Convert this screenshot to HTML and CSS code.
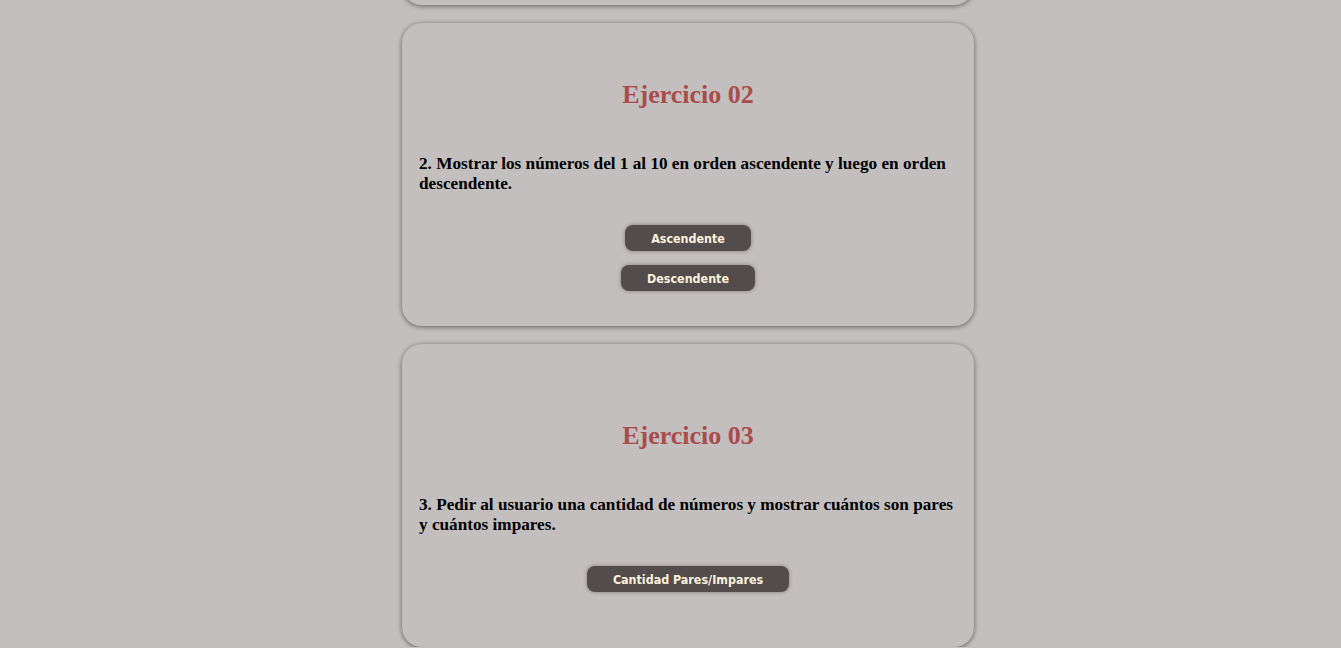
FILE: index.html
```html
<!DOCTYPE html>
<html lang="es">
<head>
<meta charset="utf-8">
<title>Ejercicios</title>
<link rel="stylesheet" href="styles.css">
</head>
<body>
<main class="list">
  <section class="card">
    <h2 class="title">Ejercicio 01</h2>
    <p class="desc">1. Mostrar los números del 1 al 10.</p>
    <div class="actions">
      <button class="btn">Mostrar</button>
    </div>
  </section>
  <section class="card">
    <h2 class="title">Ejercicio 02</h2>
    <p class="desc">2. Mostrar los números del 1 al 10 en orden ascendente y luego en orden descendente.</p>
    <div class="actions">
      <button class="btn">Ascendente</button>
      <button class="btn">Descendente</button>
    </div>
  </section>
  <section class="card">
    <h2 class="title">Ejercicio 03</h2>
    <p class="desc">3. Pedir al usuario una cantidad de números y mostrar cuántos son pares y cuántos impares.</p>
    <div class="actions">
      <button class="btn">Cantidad Pares/Impares</button>
    </div>
  </section>
</main>
</body>
</html>
```

FILE: styles.css
```css
html, body {
  margin: 0;
  padding: 0;
  background: #c3bfbe;
}
body {
  padding-left: 35px;
  font-family: "Liberation Serif", "Times New Roman", serif;
  overflow: hidden;
}
.list {
  width: 572px;
  margin: -298px auto 0;
  display: flex;
  flex-direction: column;
  gap: 18px;
}
.card {
  box-sizing: border-box;
  height: 303px;
  padding: 0 17px;
  background: #c3bfbe;
  border-radius: 20px;
  box-shadow: 0 1px 5px rgba(0, 0, 0, 0.5);
  display: flex;
  flex-direction: column;
  justify-content: center;
}
.title {
  margin: 22px 0 44px;
  font-size: 26px;
  line-height: 30px;
  font-weight: bold;
  color: #a84c4c;
  text-align: center;
}
.desc {
  margin: 0 0 31px;
  font-size: 17.2px;
  line-height: 20px;
  font-weight: bold;
  color: #000;
}
.actions {
  display: flex;
  flex-direction: column;
  align-items: center;
  gap: 14px;
}
.btn {
  height: 26px;
  padding: 0 26px;
  border: none;
  border-radius: 8px;
  background: #524d4c;
  color: #fdf0dc;
  font-family: "DejaVu Sans Condensed", "DejaVu Sans", sans-serif;
  font-weight: bold;
  font-size: 12.4px;
  box-shadow: 0 0 4px rgba(0, 0, 0, 0.35);
  cursor: pointer;
}
```
